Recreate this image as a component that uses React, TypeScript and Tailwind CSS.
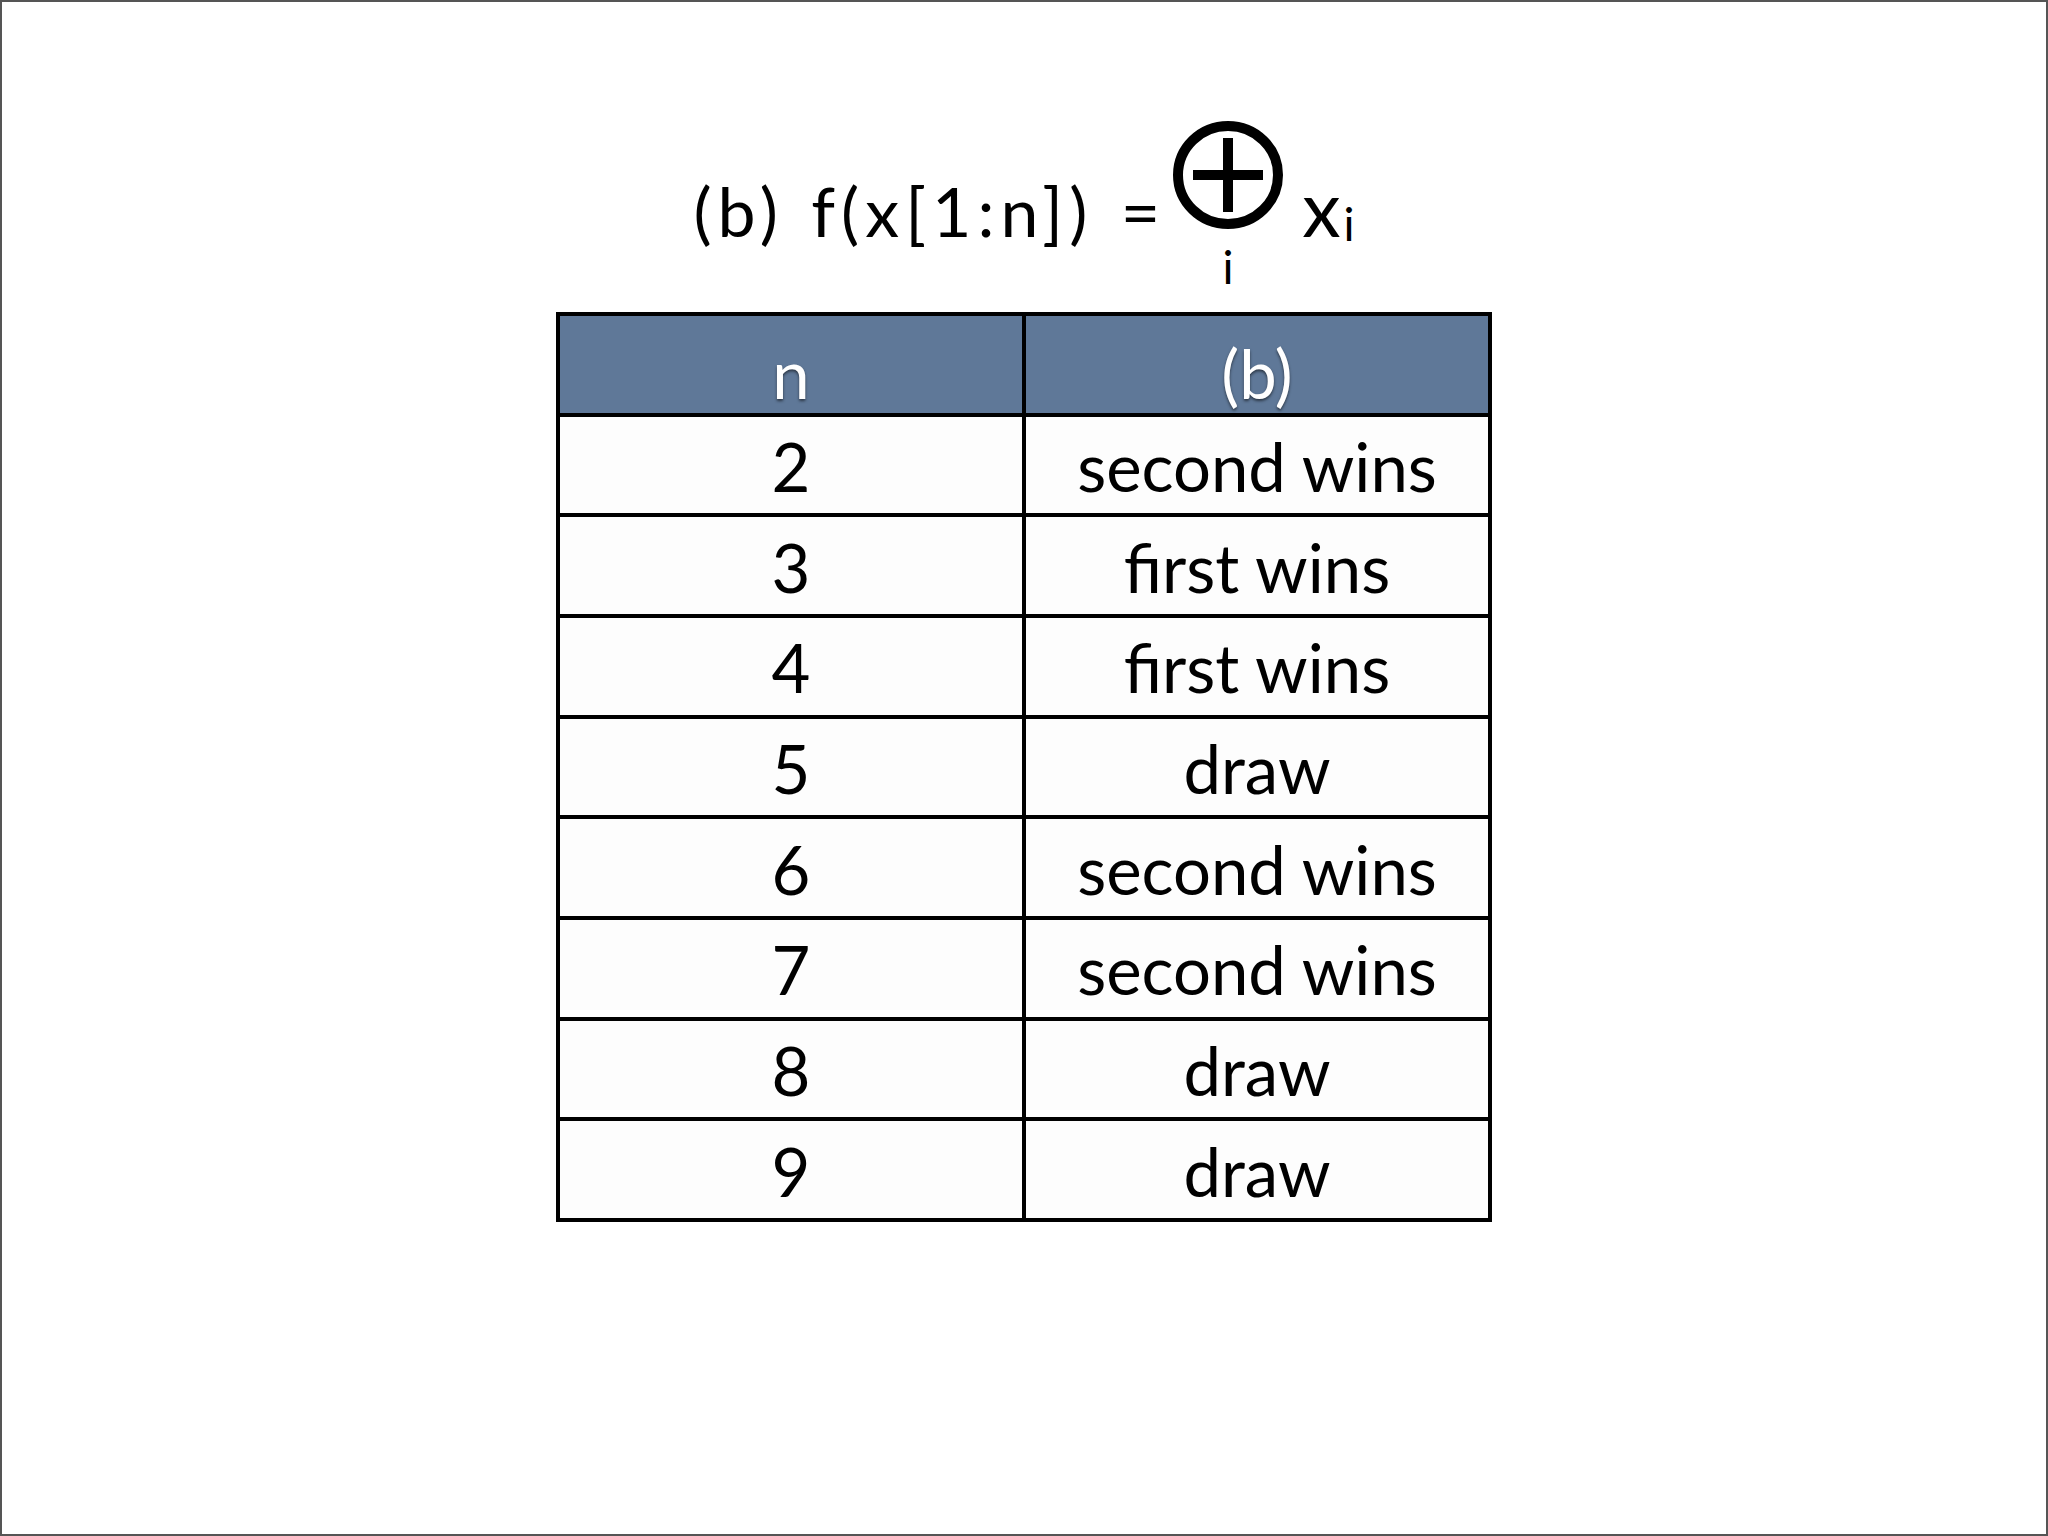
import React from "react";

const rows: [string, string][] = [
  ["2", "second wins"],
  ["3", "first wins"],
  ["4", "first wins"],
  ["5", "draw"],
  ["6", "second wins"],
  ["7", "second wins"],
  ["8", "draw"],
  ["9", "draw"],
];

function OPlus() {
  return (
    <svg width="112" height="112" viewBox="0 0 112 112" className="block">
      <ellipse cx="56" cy="55" rx="50" ry="49" fill="none" stroke="black" strokeWidth="10" />
      <line x1="21" y1="55" x2="91" y2="55" stroke="black" strokeWidth="10" />
      <line x1="56" y1="18" x2="56" y2="92" stroke="black" strokeWidth="10" />
    </svg>
  );
}

export default function App() {
  return (
    <div className="w-[2048px] h-[1536px] border-2 border-[#555] bg-white flex flex-col items-center font-[Lato,sans-serif] text-black">
      <div className="mt-[118px] h-[173px] flex items-start">
        <span className="mt-[57px] text-[68px] leading-none tracking-[6px] [word-spacing:4px] whitespace-pre">(b) f(x[1:n]) =</span>
        <div className="ml-[6px] flex flex-col items-center">
          <OPlus />
          <span className="mt-[12px] text-[46px] leading-none">i</span>
        </div>
        <span className="ml-[18px] mt-[49px] text-[77px] leading-none">x</span>
        <span className="ml-[3px] mt-[81px] text-[46px] leading-none">i</span>
      </div>
      <div className="mt-[19px] w-[936px] h-[910px] grid grid-cols-2 grid-rows-9 gap-1 p-1 bg-black">
        <div className="bg-[#5f7898] flex items-center justify-center pt-[19px] text-[67px] leading-none text-white [text-shadow:0_2px_3px_rgba(0,0,0,0.55)]">n</div>
        <div className="bg-[#5f7898] flex items-center justify-center pt-[19px] text-[67px] leading-none text-white [text-shadow:0_2px_3px_rgba(0,0,0,0.55)]">(b)</div>
        {rows.map(([n, r]) => (
          <React.Fragment key={n}>
            <div className="bg-[#fdfdfd] flex items-center justify-center pt-[3px] text-[67px] leading-none">{n}</div>
            <div className="bg-[#fdfdfd] flex items-center justify-center pt-[3px] text-[67px] leading-none">{r}</div>
          </React.Fragment>
        ))}
      </div>
    </div>
  );
}
